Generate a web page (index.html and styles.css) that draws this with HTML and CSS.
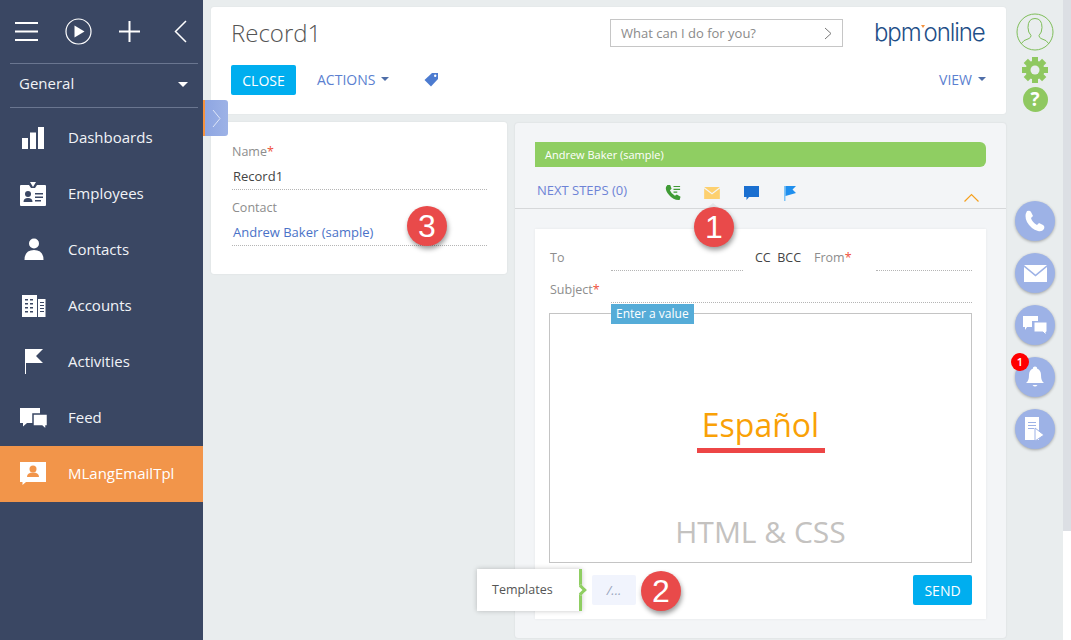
FILE: index.html
```html
<!DOCTYPE html>
<html lang="en">
<head>
<meta charset="utf-8">
<title>Record1</title>
<link rel="stylesheet" href="styles.css">
</head>
<body>
<div class="app">
  <aside class="sidebar">
    <div class="topbar">
      <svg class="ico-menu" width="23" height="19" viewBox="0 0 23 19"><path d="M0 1h23M0 9.500h23M0 18h23" stroke="#fff" stroke-width="2"/></svg>
      <svg class="ico-play" width="27" height="27" viewBox="0 0 27 27"><circle cx="13.500" cy="13.500" r="12.500" fill="none" stroke="#fff" stroke-width="1.200"/><path d="M9.500 7.500l10 6-10 6z" fill="#fff"/></svg>
      <svg class="ico-plus" width="21" height="21" viewBox="0 0 21 21"><path d="M10.500 0v21M0 10.500h21" stroke="#fff" stroke-width="2"/></svg>
      <svg class="ico-back" width="13" height="23" viewBox="0 0 13 23"><path d="M12 1L1.500 11.500 12 22" fill="none" stroke="#fff" stroke-width="1.500"/></svg>
    </div>
    <div class="workplace"><span>General</span><i class="caret-white"></i></div>
    <nav class="nav">
      <a class="nav-item"><span class="nav-ico"><svg width="26" height="26" viewBox="0 0 26 26"><path d="M2 13h6v11H2zM10 7.500h6V24h-6zM18 2h6v22h-6z" fill="#fff"/></svg></span>Dashboards</a>
      <a class="nav-item"><span class="nav-ico"><svg width="26" height="26" viewBox="0 0 26 26"><path d="M1 4h8l2 3h4l2-3h8q1 0 1 1v19q0 1-1 1H1q-1 0-1-1V5q0-1 1-1z" fill="#fff"/><path d="M10 1h6l-3 5z" fill="#fff"/><circle cx="8" cy="13" r="3" fill="#3a4763"/><path d="M3.500 21q0-4 4.500-4t4.500 4zM15 12h8v1.500h-8zM15 15.500h8V17h-8zM15 19h6v1.500h-6z" fill="#3a4763"/></svg></span>Employees</a>
      <a class="nav-item"><span class="nav-ico"><svg width="26" height="26" viewBox="0 0 26 26"><circle cx="14" cy="6.500" r="5" fill="#fff"/><path d="M4.500 23q0-10 9.500-10t9.500 10z" fill="#fff"/></svg></span>Contacts</a>
      <a class="nav-item"><span class="nav-ico"><svg width="26" height="26" viewBox="0 0 26 26"><g transform="translate(1 1)"><path d="M1 1h15v22H1zM17 5h7.500v18H17z" fill="#fff"/><path d="M4 5h3v1.500H4zM9 5h3v1.500H9zM4 9h3v1.500H4zM9 9h3v1.500H9zM4 13h3v1.500H4zM9 13h3v1.500H9zM4 17h3v1.500H4zM9 17h3v1.500H9zM19 8h4v1H19zM19 11h4v1H19zM19 14h4v1H19zM19 17h4v1H19z" fill="#3a4763"/></g></svg></span>Accounts</a>
      <a class="nav-item"><span class="nav-ico"><svg width="26" height="26" viewBox="0 0 26 26"><path d="M5 0h1v25H5z" fill="#fff"/><path d="M6 0h17l-7 7 7 7H6z" fill="#fff"/></svg></span>Activities</a>
      <a class="nav-item"><span class="nav-ico"><svg width="28" height="24" viewBox="0 0 28 24"><path d="M0 2h20v15H7l-4 3.500V17H0z" fill="#fff"/><path d="M13 8h14.500v12H26v3.500L22 20h-9z" fill="#fff" stroke="#3a4763" stroke-width="1.500"/></svg></span>Feed</a>
      <a class="nav-item active"><span class="nav-ico"><svg width="26" height="26" viewBox="0 0 26 26"><path d="M0 1h26v20H6l-3.500 3v-3H0z" fill="#fff"/><circle cx="13" cy="8" r="3.500" fill="#f2954a"/><path d="M7 16q0-4.500 6-4.500t6 4.500z" fill="#f2954a"/></svg></span>MLangEmailTpl</a>
    </nav>
  </aside>

  <main class="content">
    <div class="handle"><svg width="9" height="19" viewBox="0 0 9 19"><path d="M1 1l7 8.500L1 18" fill="none" stroke="#dfe6f7" stroke-width="1"/></svg></div>

    <header class="head-card">
      <div class="head-top">
        <h1 class="title">Record1</h1>
        <div class="search"><span>What can I do for you?</span><svg width="8" height="13" viewBox="0 0 8 13"><path d="M1 1l6 5.500L1 12" fill="none" stroke="#777" stroke-width="1"/></svg></div>
        <div class="logo">bpm<span class="logo-dot"></span>online</div>
      </div>
      <div class="head-actions">
        <button class="btn">CLOSE</button>
        <a class="link-btn actions">ACTIONS<i class="caret"></i></a>
        <svg class="tag" width="15" height="15" viewBox="0 0 15 15"><path d="M8 1h6v6L7 14.500 0.500 8z" fill="#4c7bd0"/><circle cx="11.200" cy="3.800" r="1.200" fill="#fff"/></svg>
        <a class="link-btn view">VIEW<i class="caret"></i></a>
      </div>
    </header>

    <div class="columns">
      <section class="left-card">
        <div class="field">
          <div class="label">Name<b>*</b></div>
          <div class="value">Record1</div>
        </div>
        <div class="field">
          <div class="label">Contact</div>
          <div class="value link">Andrew Baker (sample)</div>
          <span class="badge badge-3">3</span>
        </div>
      </section>

      <section class="right-card">
        <div class="green-bar">Andrew Baker (sample)</div>
        <div class="steps">
          <span class="steps-title">NEXT STEPS (0)</span>
          <svg class="step-ico step-phone" width="17" height="16" viewBox="0 0 18 17"><path d="M2.500 0L5.500 0 7 4 5.200 5.500Q6.500 9 10.500 11.500L12.500 10 16.500 12.500 15.500 16Q9 16.500 4.500 11T1 2z" fill="#3f9b35"/><path d="M9 1h7v1.200H9zM9 4h7v1.200H9zM9 7h4v1.200H9z" fill="#3f9b35"/></svg>
          <svg class="step-ico step-mail" width="16" height="12" viewBox="0 0 17 13"><path d="M0 0h17L8.500 6.500z" fill="#fdd06f"/><path d="M0 1.500l8.500 6.500 8.500-6.500V13H0z" fill="#fdd06f"/></svg>
          <svg class="step-ico step-chat" width="15" height="14" viewBox="0 0 15 14"><path d="M0 0h15v11H5l-2.500 3v-3H0z" fill="#1a6fd0"/></svg>
          <svg class="step-ico step-flag" width="12" height="15" viewBox="0 0 12 15"><path d="M0 0h1.500v15H0z" fill="#7fc4f5"/><path d="M1.500 0H12L8.500 3.500 12 7 1.500 10z" fill="#1f8fee"/></svg>
          <svg class="chevron" width="15" height="9" viewBox="0 0 15 9"><path d="M.5 8.500l7-7 7 7" fill="none" stroke="#f5a01e" stroke-width="1.200"/></svg>
          <span class="badge badge-1">1</span>
        </div>
        <div class="mail-card">
          <div class="mail-row">
            <span class="label to">To</span>
            <span class="dots to-line"></span>
            <span class="cc">CC&nbsp; BCC</span>
            <span class="label from">From<b>*</b></span>
            <span class="dots grow"></span>
          </div>
          <div class="mail-row subject">
            <span class="label to">Subject<b>*</b></span>
            <span class="dots grow"></span>
          </div>
          <div class="editor">
            <span class="hint">Enter a value</span>
            <div class="lang">Español</div>
            <div class="html-css">HTML &amp; CSS</div>
          </div>
          <div class="mail-foot">
            <div class="tpl-pop">Templates</div>
            <div class="tpl-tail"></div>
            <div class="tpl-input">/...</div>
            <span class="badge badge-2">2</span>
            <button class="btn send">SEND</button>
          </div>
        </div>
      </section>
    </div>
  </main>

  <aside class="rail">
    <svg class="avatar" width="38" height="38" viewBox="0 0 38 38"><circle cx="19" cy="19" r="18" fill="none" stroke="#7fbe5a" stroke-width="1"/><path d="M5 31q2-4 8-5.500 2-1 2-3-3-3-3-8 0-9 7-9t7 9q0 5-3 8 0 2 2 3 6 1.500 8 5.500" fill="none" stroke="#7fbe5a" stroke-width="1"/></svg>
    <svg class="gear" width="26" height="26" viewBox="0 0 26 26"><g fill="#8fc860"><path d="M10 0h6v26h-6z"/><path d="M10 0h6v26h-6z" transform="rotate(45 13 13)"/><path d="M10 0h6v26h-6z" transform="rotate(90 13 13)"/><path d="M10 0h6v26h-6z" transform="rotate(135 13 13)"/></g><circle cx="13" cy="13" r="9.500" fill="#8fc860"/><circle cx="13" cy="13" r="4.500" fill="#e9edee"/></svg>
    <span class="help">?</span>
    <div class="rail-btns">
      <span class="round"><svg width="22" height="22" viewBox="0 0 22 22"><path d="M3 1Q6 0 7 2l2 4-2 2q1 4 6 7l2-2 4 2q2 1 1 4-2 3-6 2Q7 19 3 12 0 6 3 1z" fill="#fff"/></svg></span>
      <span class="round"><svg width="23" height="17" viewBox="0 0 23 17"><path d="M0 0h23L11.500 9.500z" fill="#fff"/><path d="M0 2l11.500 9.500L23 2v15H0z" fill="#fff"/></svg></span>
      <span class="round"><svg width="24" height="20" viewBox="0 0 24 20"><path d="M0 1h15v5H9v6H4l-2 3v-3H0z" fill="#fff"/><path d="M11 7h13v10h-1v3l-3-3h-9z" fill="#fff" stroke="#9db2e6" stroke-width="1"/></svg></span>
      <span class="round bell"><svg width="20" height="22" viewBox="0 0 20 22"><path d="M1 17q3-2 3-8 0-5 4-6.500V1.500q2-2 4 0v1Q16 4 16 9q0 6 3 8z" fill="#fff"/><path d="M7.500 19h5q-2.500 3-5 0z" fill="#fff"/></svg><span class="notif">1</span></span>
      <span class="round"><svg width="20" height="24" viewBox="0 0 20 24"><path d="M0 0h14v23H0z" fill="#fff"/><path d="M3 5h8v1H3zM3 8h8v1H3zM3 11h6v1H3z" fill="#9db2e6"/><path d="M10 11l9 7-9 6z" fill="#fff" stroke="#9db2e6" stroke-width="1"/></svg></span>
    </div>
  </aside>
  <div class="scrollbar"><div class="thumb"></div></div>
</div>
</body>
</html>
```
FILE: styles.css
```css
* { box-sizing: border-box; }
html, body { margin: 0; padding: 0; height: 100%; overflow: hidden; }
body { font-family: "Open Sans", "Liberation Sans", sans-serif; color: #444; font-size: 13px; }
.app { display: flex; width: 1071px; height: 640px; background: #e9edee; position: relative; overflow: hidden; }

.sidebar { width: 203px; flex: none; background: #3a4763; color: #f1f3f7; }
.topbar { height: 64px; margin-left: 10px; margin-right: 5px; border-bottom: 1px solid #6a7690; display: flex; align-items: center; padding: 0 0 0 5px; }
.ico-menu { margin-right: 27px; }
.ico-play { margin-right: 27px; }
.ico-plus { margin-right: 34px; }
.workplace { height: 44px; margin-left: 10px; margin-right: 5px; border-bottom: 1px solid #6a7690; display: flex; align-items: center; justify-content: space-between; padding: 0 10px 5px 9px; font-size: 15px; }
.caret-white { width: 0; height: 0; border-left: 5.500px solid transparent; border-right: 5.500px solid transparent; border-top: 5px solid #fff; margin-top: 3px; }
.nav { display: flex; flex-direction: column; padding-top: 2px; }
.nav-item { height: 56px; display: flex; align-items: center; font-size: 15px; color: #f1f3f7; padding: 0 0 2px 20px; }
.nav-ico { width: 48px; display: flex; align-items: center; margin-top: 2px; }
.nav-item.active { background: #f2954a; color: #fff; }

.content { flex: none; width: 803px; height: 640px; padding: 7px 0 0 8px; position: relative; }
.handle { position: absolute; left: 0; top: 100px; width: 25px; height: 36px; background: linear-gradient(90deg, #8ea6e2, #9db2e6); border-left: 2px solid #f5923e; border-radius: 0 3px 3px 0; display: flex; align-items: center; justify-content: center; z-index: 3; }

.head-card { width: 795px; height: 107px; background: #fff; border-radius: 3px; padding: 0 21px 0 20px; box-shadow: 0 0 2px rgba(0,0,0,.06); }
.head-top { height: 50px; display: flex; align-items: center; }
.title { margin: 0; font-size: 24px; font-weight: 300; color: #555; flex: 1; line-height: 1; padding-top: 1px; }
.search { width: 233px; height: 28px; border: 1px solid #c6c6c6; display: flex; align-items: center; justify-content: space-between; padding: 0 10px; color: #8a8a8a; font-size: 13px; margin-right: 31px; margin-top: 2px; }
.logo { font-family: "Inter", "Liberation Sans", sans-serif; font-size: 24px; font-weight: 300; color: #1f4f88; letter-spacing: -1.100px; width: 111px; white-space: nowrap; margin-top: 1px; }
.logo-dot { display: inline-block; width: 0; height: 0; border-left: 2px solid transparent; border-right: 2px solid transparent; border-top: 3px solid #f5923e; vertical-align: 13px; margin: 0 -1px 0 0; }
.head-actions { display: flex; align-items: center; height: 30px; margin-top: 8px; }
.btn { border: 0; background: #00aeef; color: #fff; font-family: inherit; font-size: 14px; height: 30px; width: 65px; border-radius: 2px; padding: 0; }
.link-btn { color: #5b7fd0; font-size: 14px; display: inline-flex; align-items: center; margin-top: -2px; }
.actions { margin-left: 21px; }
.tag { margin-left: 35px; margin-top: -1px; }
.view { margin-left: auto; margin-right: -1px; }
.caret { display: inline-block; width: 0; height: 0; border-left: 4.500px solid transparent; border-right: 4.500px solid transparent; border-top: 4.500px solid #4f6ea8; margin-left: 6px; }

.columns { display: flex; gap: 8px; margin-top: 8px; align-items: flex-start; }
.left-card { width: 296px; height: 152px; background: #fff; border-radius: 3px; padding: 21px 20px 0 21px; box-shadow: 0 0 2px rgba(0,0,0,.08); }
.field { position: relative; height: 56px; }
.label { color: #8d8d8d; font-size: 12.500px; line-height: 18px; }
.label b { color: #f0503c; font-weight: 400; }
.value { border-bottom: 1px dotted #b5b5b5; font-size: 13px; color: #444; height: 29px; line-height: 30px; padding-left: 1px; }
.value.link { color: #4a72c8; }
.badge { position: absolute; width: 40px; height: 40px; border-radius: 50%; background: #e94a4a; color: #fff; font-family: "Liberation Sans", sans-serif; font-size: 32px; display: flex; align-items: center; justify-content: center; box-shadow: 1px 3px 5px rgba(0,0,0,.4); z-index: 4; }
.badge-3 { left: 175px; top: 7px; }

.right-card { width: 491px; height: 515px; margin-top: 1px; background: #f3f5f7; border-radius: 3px; padding: 19px 20px 0; box-shadow: 0 0 2px rgba(0,0,0,.1); }
.green-bar { height: 25px; background: #8fce62; color: #fff; font-size: 11px; line-height: 25px; padding-left: 10px; border-radius: 0 6px 6px 0; }
.steps { position: relative; margin: 0 -20px; height: 42px; border-bottom: 1px solid #d6d8da; display: flex; align-items: flex-start; padding-left: 22px; }
.steps::after { content: ""; position: absolute; left: 192px; bottom: 0; width: 0; height: 0; border-left: 6px solid transparent; border-right: 6px solid transparent; border-bottom: 5px solid #e4e6e8; }
.steps-title { color: #6d83d6; font-size: 13px; line-height: 18px; width: 128px; margin-top: 14px; }
.step-ico { flex: none; }
.step-phone { margin: 18px 22px 0 0; }
.step-mail { margin: 20px 24px 0 0; }
.step-chat { margin: 19px 25px 0 0; }
.step-flag { margin: 19px 0 0 0; }
.chevron { position: absolute; right: 27px; bottom: 6px; }
.badge-1 { left: 179px; top: 40px; }
.mail-card { position: relative; margin-top: 20px; height: 390px; background: #fff; padding: 0 14px; box-shadow: 0 0 3px rgba(0,0,0,.06); }
.mail-row { display: flex; align-items: flex-end; height: 42px; }
.mail-row.subject { height: 32px; }
.to { width: 61px; margin: 0 0 4px 1px; }
.mail-row .to { width: 61px; }
.dots { border-bottom: 1px dotted #b5b5b5; height: 1px; }
.to-line { width: 132px; }
.grow { flex: 1; }
.cc { color: #444; font-size: 12.500px; margin-left: 12px; width: 59px; white-space: nowrap; margin-bottom: 5px; }
.from { width: 62px; margin-bottom: 4px; }
.editor { position: relative; height: 250px; border: 1px solid #c4c4c4; margin-top: 10px; display: flex; flex-direction: column; align-items: center; }
.hint { position: absolute; left: 61px; top: -10px; height: 20px; line-height: 20px; padding: 0 5px; background: #55acd8; color: #fff; font-size: 12px; }
.lang { color: #f9a106; font-size: 32px; margin-top: 90px; height: 49px; line-height: 42px; border-bottom: 5px solid #ed4646; width: 128px; text-align: center; }
.html-css { color: #c4c2c0; font-size: 30px; margin-top: 58px; line-height: 41px; }
.mail-foot { position: relative; height: 56px; }
.tpl-pop { position: absolute; left: -72px; top: 6px; width: 105px; height: 42px; line-height: 42px; background: #fff; border-right: 3px solid #8fce62; padding-left: 15px; font-size: 12.500px; color: #555; box-shadow: 0 0 5px rgba(0,0,0,.22); z-index: 5; }
.tpl-tail { position: absolute; left: 28px; top: 23px; width: 8px; height: 8px; background: #fff; border-top: 3px solid #8fce62; border-right: 3px solid #8fce62; transform: rotate(45deg); z-index: 5; }
.tpl-input { position: absolute; left: 43px; top: 12px; width: 44px; height: 30px; line-height: 30px; background: #f1f4fd; color: #9aa5bd; text-align: center; font-style: italic; font-size: 13px; border-radius: 2px; }
.badge-2 { left: 92px; top: 8px; }
.send { position: absolute; right: 0; top: 12px; width: 59px; }

.rail { width: 57px; flex: none; display: flex; flex-direction: column; align-items: center; padding-top: 13px; padding-left: 1px; }
.avatar { flex: none; }
.gear { flex: none; margin-top: 6px; }
.help { flex: none; width: 25px; height: 25px; margin-top: 4px; background: #8fc860; border-radius: 50%; color: #fff; font-weight: 700; font-size: 19px; line-height: 25px; text-align: center; }
.rail-btns { display: flex; flex-direction: column; gap: 12px; margin-top: 89px; }
.round { position: relative; width: 40px; height: 40px; border-radius: 50%; background: #9db2e6; display: flex; align-items: center; justify-content: center; box-shadow: 0 1px 3px rgba(0,0,0,.3); }
.notif { position: absolute; left: -4px; top: -4px; width: 18px; height: 18px; border-radius: 50%; background: #f00; color: #fff; font-size: 11px; font-weight: 600; line-height: 18px; text-align: center; }
.scrollbar { width: 8px; height: 640px; flex: none; background: #fff; }
.thumb { height: 531px; background: #dcdfe4; }
```
